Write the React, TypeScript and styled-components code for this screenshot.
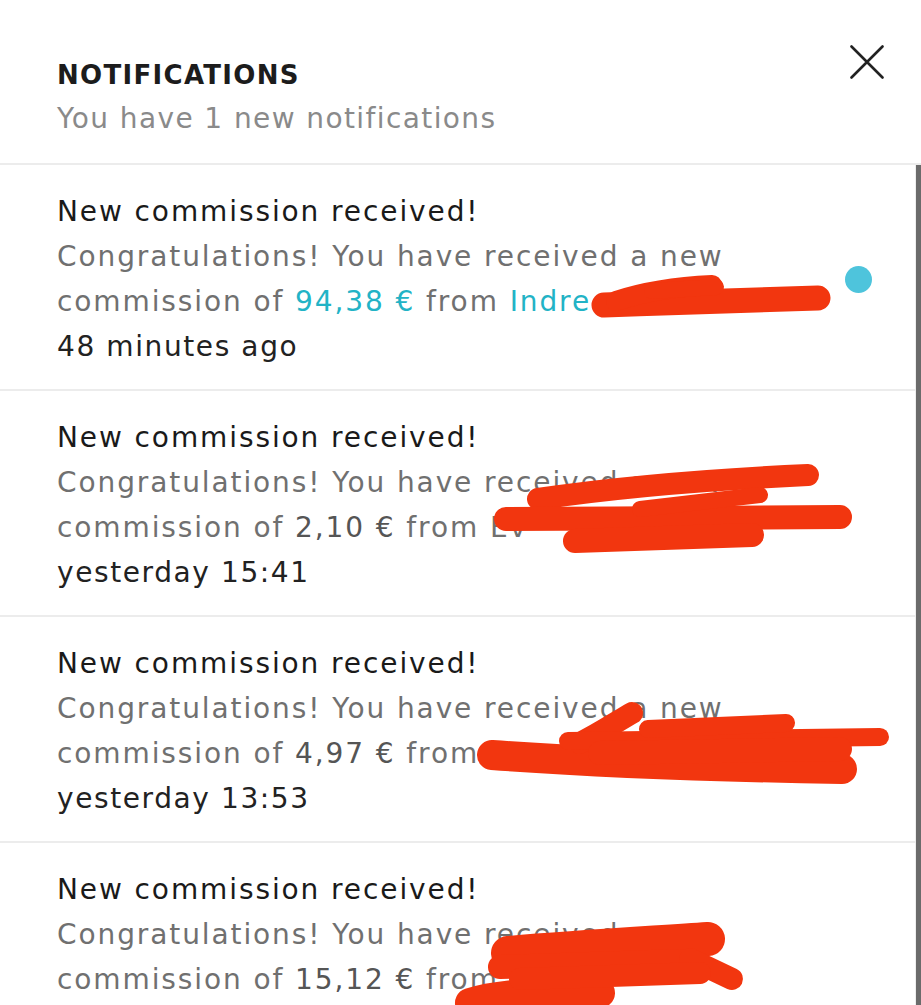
import React from "react";
import styled, { createGlobalStyle } from "styled-components";

const GlobalStyle = createGlobalStyle`
  html, body { margin: 0; padding: 0; background: #ffffff; }
  body { font-family: "DejaVu Sans", "Noto Sans", sans-serif; }
`;

const Panel = styled.div`
  width: 921px;
  height: 1005px;
  overflow: hidden;
  background: #ffffff;
  display: flex;
  flex-direction: column;
`;

const Header = styled.header`
  display: flex;
  justify-content: space-between;
  align-items: flex-start;
  padding: 45px 37px 22px 57px;
  border-bottom: 2px solid #ececec;
`;

const HeadText = styled.div`
  display: flex;
  flex-direction: column;
  padding-top: 10px;
`;

const Title = styled.h1`
  margin: 0;
  font-size: 26px;
  line-height: 40px;
  font-weight: 700;
  color: #1c1c1c;
  letter-spacing: 1.3px;
`;

const Subtitle = styled.p`
  margin: 2px 0 0;
  font-size: 28px;
  line-height: 44px;
  font-weight: 400;
  color: #8a8a8a;
  letter-spacing: 1.4px;
`;

const CloseButton = styled.button`
  width: 34px;
  height: 34px;
  padding: 0;
  border: none;
  background: transparent;
  cursor: pointer;
  display: block;
`;

const List = styled.div`
  flex: 1;
  display: flex;
  flex-direction: column;
  border-right: 5px solid #6b6b6b;
  box-shadow: inset -1px 0 0 #eeeeee;
`;

const Row = styled.div`
  position: relative;
  display: flex;
  align-items: center;
  padding: 24px 0 20px 57px;
  border-bottom: 2px solid #ececec;
  flex-shrink: 0;
`;

const Content = styled.div`
  flex: 1;
  display: flex;
  flex-direction: column;
`;

const RowTitle = styled.div`
  font-size: 28px;
  line-height: 45px;
  color: #1a1a1a;
  letter-spacing: 1.9px;
`;

const Body = styled.div`
  font-size: 28px;
  line-height: 45px;
  color: #707070;
  letter-spacing: 1.9px;
  white-space: nowrap;
`;

const Amount = styled.span<{ $accent?: boolean }>`
  color: ${(p) => (p.$accent ? "#22b3c6" : "#555555")};
`;

const Name = styled.span<{ $accent?: boolean }>`
  color: ${(p) => (p.$accent ? "#22b3c6" : "#707070")};
`;

const Time = styled.div`
  font-size: 28px;
  line-height: 45px;
  color: #222222;
  letter-spacing: 1.6px;
`;

const UnreadDot = styled.span`
  width: 27px;
  height: 27px;
  border-radius: 50%;
  background: #4ec4dc;
  margin-right: 44px;
  flex-shrink: 0;
`;

const Scribble = styled.svg`
  position: absolute;
  left: 0;
  top: 0;
  width: 916px;
  pointer-events: none;
  overflow: visible;
`;

const RED = "#f2360f";

type Item = {
  amount: string;
  name: string;
  time: string;
  unread?: boolean;
  strokes: { d: string; w: number }[];
};

const items: Item[] = [
  {
    amount: "94,38 €",
    name: "Indre",
    time: "48 minutes ago",
    unread: true,
    strokes: [
      { d: "M604 140 C 680 137, 760 135, 818 133", w: 25 },
      { d: "M616 136 C 640 128, 668 122, 712 120", w: 20 },
      { d: "M652 126 L 716 122", w: 16 },
    ],
  },
  {
    amount: "2,10 €",
    name: "Ev",
    time: "yesterday 15:41",
    strokes: [
      { d: "M538 108 C 620 96, 720 88, 808 84", w: 22 },
      { d: "M506 128 C 620 128, 760 126, 840 126", w: 24 },
      { d: "M575 150 C 640 148, 700 146, 752 144", w: 24 },
      { d: "M640 118 L 760 104", w: 16 },
    ],
  },
  {
    amount: "4,97 €",
    name: "",
    time: "yesterday 13:53",
    strokes: [
      { d: "M492 138 C 600 146, 720 150, 842 152", w: 30 },
      { d: "M580 126 C 600 116, 618 104, 632 96", w: 22 },
      { d: "M568 124 L 880 120", w: 18 },
      { d: "M648 112 L 786 106", w: 18 },
      { d: "M600 136 L 840 132", w: 24 },
    ],
  },
  {
    amount: "15,12 €",
    name: "",
    time: "",
    strokes: [
      { d: "M508 110 C 580 104, 650 100, 708 96", w: 34 },
      { d: "M500 124 L 680 118", w: 24 },
      { d: "M690 116 L 732 136", w: 22 },
      { d: "M470 160 C 500 150, 560 148, 600 150", w: 30 },
      { d: "M520 136 L 700 130", w: 22 },
    ],
  },
];

const CloseIcon = () => (
  <svg width="34" height="34" viewBox="0 0 34 34">
    <path d="M1.5 1.5 L32.5 32.5 M32.5 1.5 L1.5 32.5" stroke="#222" strokeWidth="2.6" strokeLinecap="round" />
  </svg>
);

export default function App() {
  return (
    <>
      <GlobalStyle />
      <Panel>
        <Header>
          <HeadText>
            <Title>NOTIFICATIONS</Title>
            <Subtitle>You have 1 new notifications</Subtitle>
          </HeadText>
          <CloseButton aria-label="Close">
            <CloseIcon />
          </CloseButton>
        </Header>
        <List>
          {items.map((it, i) => (
            <Row key={i}>
              <Content>
                <RowTitle>New commission received!</RowTitle>
                <Body>
                  Congratulations! You have received a new
                  <br />
                  commission of <Amount $accent={it.unread}>{it.amount}</Amount> from{" "}
                  <Name $accent={it.unread}>{it.name}</Name>
                </Body>
                <Time>{it.time || "\u00a0"}</Time>
              </Content>
              {it.unread && <UnreadDot />}
              <Scribble height="226" viewBox="0 0 916 226">
                {it.strokes.map((s, j) => (
                  <path key={j} d={s.d} stroke={RED} strokeWidth={s.w} strokeLinecap="round" fill="none" />
                ))}
              </Scribble>
            </Row>
          ))}
        </List>
      </Panel>
    </>
  );
}
